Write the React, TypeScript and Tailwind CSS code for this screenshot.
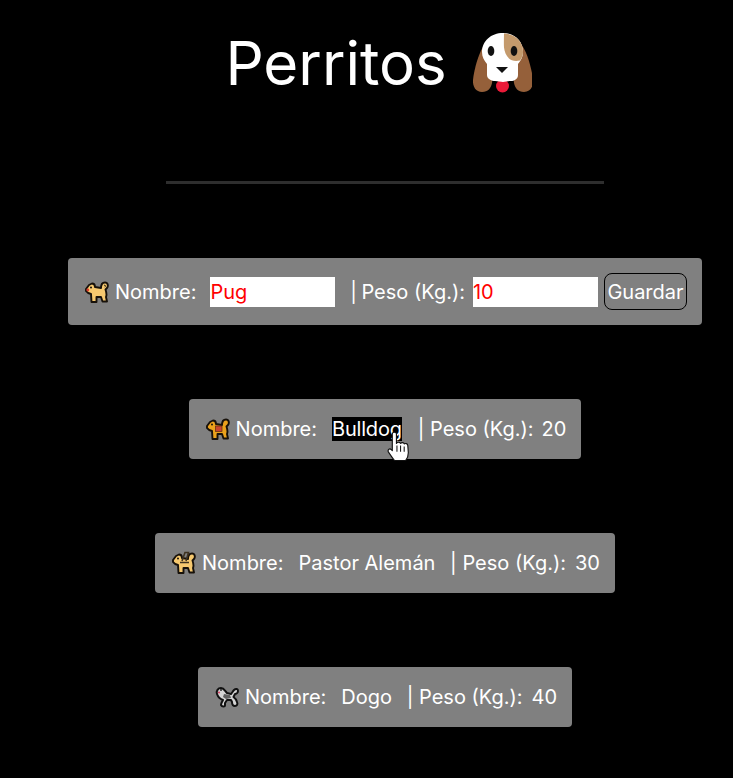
import React from "react";

function Face() {
  return (
    <svg width="60" height="60" viewBox="13 13 60 60" className="block">
      <path d="M27 23C20 30 15 50 14 60c-.5 7 3 12 9 12 6 0 9-4 10-9l3-30z" fill="#95603a" />
      <path d="M61 23c7 7 12 27 13 37 .5 7-3 12-9 12-6 0-9-4-10-9l-3-30z" fill="#95603a" />
      <circle cx="43.500" cy="66" r="6.500" fill="#ea1a38" />
      <path d="M44 13C32 13 23 21 23 32c0 5 2 8 5 12v11c0 4 5 6 8 6 3 0 6 1 8 1s5-1 8-1c3 0 7-2 7-6V44c3-4 5-7 5-12C64 21 56 13 44 13z" fill="#ffffff" />
      <path d="M45 13.500C56 14 64 21 64 32c0 3-1 6-3 8.500-5 1-9 0-11-2-3-3-4.500-7-5-11-.3-5 0-10 0-14.500z" fill="#c49a6c" />
      <ellipse cx="32" cy="31" rx="3.300" ry="5" fill="#111" />
      <ellipse cx="55" cy="31" rx="3.300" ry="5" fill="#111" />
      <path d="M37 47h12l-6 6z" fill="#111" />
    </svg>
  );
}

function Dog({ kind }: { kind: "plain" | "service" | "guide" | "poodle" }) {
  if (kind === "poodle") {
    return (
      <svg width="24" height="24" viewBox="0 0 24 24" className="block shrink-0">
        <path d="M19 5c2-2 4-1 4 1s-2 3-3 3l-1.500 3c1.500 1 3 3 3.500 5 1 2 0 4-2 4s-3-2-3-4l-1-2h-4l-2 3v2c0 2-3 2-4 0 0-2 1-3 2-5-3-1-5-3-6-6-1-3 1-6 4-6 3 0 4 3 6 5l4 1c1-1 2-3 3-4z" fill="#d4d4d4" stroke="#111" strokeWidth="2" strokeLinejoin="round" />
        <path d="M9 9l6 1 1 3-5 1-3-2z" fill="#5f5f5f" />
        <circle cx="4" cy="7.500" r="1.100" fill="#d9476a" />
        <circle cx="6" cy="5" r="0.900" fill="#111" />
      </svg>
    );
  }
  const fill = kind === "service" ? "#eba21c" : "#f7c96f";
  return (
    <svg width="24" height="24" viewBox="0 0 24 24" className="block shrink-0">
      <path d="M1 9 4 5l3-1.500c2 0 3 1.500 3 3.500l6 1c0-3 1-5.500 4-5.500s3.500 3.500 2 5.500l-1.500 1.500c1 3 1.500 5.500.5 7.500l1 4.500h-4.500l-1.500-4.500h-4.500V22H6.500l-.5-8C4 13.500 2 12.500 1 11z" fill={fill} stroke="#17110a" strokeWidth="1.900" strokeLinejoin="round" />
      {kind === "service" && <rect x="9.500" y="9" width="6.500" height="5.500" fill="#c8452f" stroke="#5a2a10" strokeWidth="0.700" />}
      {kind === "guide" && <path d="M10 10 13 1.500h3.500L14 10M8 11.500h9" fill="none" stroke="#3f3320" strokeWidth="1.600" />}
      {kind === "plain" && <circle cx="2.800" cy="10" r="1.400" fill="#e0392c" />}
      {kind === "plain" && <path d="M19 5.500c1.500-1 2 1 .8 1.500" fill="none" stroke="#17110a" strokeWidth="1" />}
      <circle cx="6" cy="7.500" r="1" fill="#17110a" />
    </svg>
  );
}

function Hand() {
  return (
    <svg width="23" height="31" viewBox="0 0 22 30" className="absolute left-[387px] top-[431px]">
      <path d="M5 3c0-2.500 4-2.500 4 0v9c1-1.500 3-1.500 4 0 1-1 3-1 3.700.5 1-.8 3-.5 3.300 1.500l.5 7c0 3-1 5.500-2.500 7.500H7C5 26 3 23 1 20c-.6-2 1.500-3.500 3-2l1 1z" fill="#fff" stroke="#111" strokeWidth="1.100" strokeLinejoin="round" />
      <path d="M9.500 14v6M13 14v6M16.500 15v5" stroke="#111" strokeWidth="1" fill="none" />
    </svg>
  );
}

function Sep({ className }: { className: string }) {
  return <span className={`flex w-[2px] justify-center ${className}`}>|</span>;
}

function Row({
  kind,
  name,
  weight,
  selected,
}: {
  kind: "service" | "guide" | "poodle";
  name: string;
  weight: string;
  selected?: boolean;
}) {
  return (
    <div className="flex h-[60px] items-center rounded-[4px] bg-[#808080] pl-[17px] pr-[15px] text-[20px] text-white">
      <Dog kind={kind} />
      <span className="ml-[6px]">Nombre:</span>
      {selected ? (
        <span className="ml-[15px] w-[70px] bg-black leading-[24px] tracking-[-0.2px] whitespace-nowrap">{name}</span>
      ) : (
        <span className="ml-[15px]">{name}</span>
      )}
      <Sep className={selected ? "ml-[18px]" : "ml-[17px]"} />
      <span className="ml-[8px]">Peso (Kg.):</span>
      <span className={selected ? "ml-[8px]" : "ml-[9px]"}>{weight}</span>
    </div>
  );
}

export default function App() {
  return (
    <div className="relative h-[778px] w-[733px] overflow-hidden bg-black pl-[37px] font-['Inter',sans-serif]">
      <div className="flex flex-col items-center">
        <h1 className="mt-[24px] flex h-[78px] items-center pr-[13px] text-[60px] font-normal leading-[78px] text-white">
          <span>Perritos</span>
          <span className="ml-[25px]"><Face /></span>
        </h1>
        <div className="mt-[79px] h-[3px] w-[438px] bg-[#2e2e2e]" />
        <div className="mt-[74px] flex h-[67px] items-center rounded-[4px] bg-[#808080] pl-[17px] pr-[15px] text-[20px] text-white">
          <Dog kind="plain" />
          <span className="ml-[6px]">Nombre:</span>
          <input
            readOnly
            value="Pug"
            className="ml-[14px] h-[30px] w-[125px] bg-white text-[20px] text-[#ff0000] outline-none"
          />
          <Sep className="ml-[17px]" />
          <span className="ml-[7px]">Peso (Kg.):</span>
          <input
            readOnly
            value="10"
            className="ml-[8px] h-[30px] w-[125px] bg-white text-[20px] text-[#ff0000] outline-none"
          />
          <button className="ml-[6px] h-[37px] w-[83px] rounded-[8px] border border-black bg-[#808080] text-[20px] text-white whitespace-nowrap">
            Guardar
          </button>
        </div>
        <div className="mt-[74px]"><Row kind="service" name="Bulldog" weight="20" selected /></div>
        <div className="mt-[74px]"><Row kind="guide" name="Pastor Alemán" weight="30" /></div>
        <div className="mt-[74px]"><Row kind="poodle" name="Dogo" weight="40" /></div>
      </div>
      <Hand />
    </div>
  );
}
